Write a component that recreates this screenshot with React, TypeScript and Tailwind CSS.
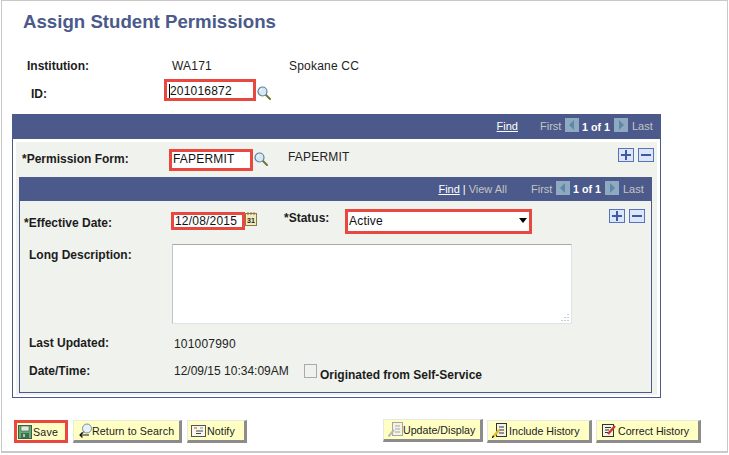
import type { ReactNode } from 'react'

const font = { fontFamily: '"Liberation Sans", Arial, sans-serif' }

const Label = ({ children, className = '' }: { children: ReactNode; className?: string }) => (
  <div className={`shrink-0 text-[12px] leading-[16px] font-bold whitespace-nowrap text-[#1c1c1c] ${className}`}>{children}</div>
)

const Value = ({ children, className = '' }: { children: ReactNode; className?: string }) => (
  <div className={`shrink-0 text-[12px] leading-[16px] tracking-[0.2px] whitespace-nowrap text-[#222] ${className}`}>{children}</div>
)

const SearchIcon = ({ className = '' }: { className?: string }) => (
  <svg width="14" height="14" viewBox="0 0 14 14" className={`shrink-0 ${className}`}>
    <path d="M8.5 8.5 L13 13" stroke="#77743a" strokeWidth="2" strokeLinecap="round" />
    <circle cx="5.5" cy="5.5" r="4.5" fill="#d6e8f4" stroke="#5d7f96" strokeWidth="1.2" />
    <path d="M3 5 A2.6 2.6 0 0 1 5 3" stroke="#fff" strokeWidth="1" fill="none" />
  </svg>
)

const ArrowButton = ({ dir }: { dir: 'left' | 'right' }) => (
  <div className="flex h-[14px] w-[14px] shrink-0 items-center justify-center bg-[#8fa9c0]">
    <svg width="8" height="10" viewBox="0 0 8 10">
      <path d={dir === 'left' ? 'M6 0 V10 L1 5 Z' : 'M2 0 V10 L7 5 Z'} fill="#5f87a6" />
    </svg>
  </div>
)

const Pager = () => (
  <div className="flex items-center whitespace-nowrap">
    <span className="w-[21px] text-[#c4c4c4]">First</span>
    <div className="mb-[3px] ml-[4px]">
      <ArrowButton dir="left" />
    </div>
    <span className="ml-[3px] w-[27px] text-[10.67px] font-bold text-white">1 of 1</span>
    <div className="mb-[3px] ml-[5px]">
      <ArrowButton dir="right" />
    </div>
    <span className="ml-[4px] w-[21px] text-[#c4c4c4]">Last</span>
  </div>
)

const PlusMinus = () => (
  <div className="flex shrink-0 gap-[4px]">
    <div className="flex h-[14px] w-[16px] items-center justify-center border border-[#5a72b8] bg-[#dbe6fb]">
      <svg width="10" height="10" viewBox="0 0 10 10">
        <path d="M5 0 V10 M0 5 H10" stroke="#3f5a9e" strokeWidth="2" />
      </svg>
    </div>
    <div className="flex h-[14px] w-[16px] items-center justify-center border border-[#5a72b8] bg-[#dbe6fb]">
      <svg width="10" height="10" viewBox="0 0 10 10">
        <path d="M0 5 H10" stroke="#3f5a9e" strokeWidth="2" />
      </svg>
    </div>
  </div>
)

const RedBox = ({ children, className = '' }: { children: ReactNode; className?: string }) => (
  <div className={`flex shrink-0 items-center overflow-hidden border-[3px] border-[#e8483f] bg-white text-[12px] leading-[14px] tracking-[0.2px] whitespace-nowrap text-[#111] ${className}`}>
    {children}
  </div>
)

const PsButton = ({ icon, children, className = '' }: { icon: ReactNode; children: ReactNode; className?: string }) => (
  <div className={`flex h-[23px] shrink-0 items-center border border-r-[3px] border-b-[3px] border-t-[#e9e9e0] border-r-[#8c8c8c] border-b-[#8c8c8c] border-l-[#e9e9e0] bg-[#ffffc4] text-[10.67px] whitespace-nowrap text-[#222] ${className}`}>
    {icon}
    {children}
  </div>
)

const SaveIcon = () => (
  <svg width="14" height="14" viewBox="0 0 14 14" className="mr-[1px] shrink-0">
    <rect x="0.5" y="0.5" width="13" height="13" fill="#63ad74" stroke="#3b5f48" />
    <rect x="3" y="1" width="8" height="5" fill="#dfe9e2" stroke="#3b5f48" strokeWidth="0.6" />
    <rect x="3" y="8" width="8" height="5" fill="#3f6f53" />
    <rect x="5" y="9" width="2" height="3" fill="#a9c9b2" />
  </svg>
)

const ReturnIcon = () => (
  <svg width="15" height="15" viewBox="0 0 15 15" className="mr-[-1px] shrink-0">
    <circle cx="9" cy="5.5" r="4.5" fill="#e6f1f8" stroke="#7a8ea0" />
    <path d="M6 8.5 L4 10.5" stroke="#777" strokeWidth="1.5" />
    <path d="M11 12 H2 M4.5 9.5 L2 12 L4.5 14.5" stroke="#111" strokeWidth="1.2" fill="none" />
  </svg>
)

const NotifyIcon = () => (
  <svg width="15" height="12" viewBox="0 0 15 12" className="mr-[1px] shrink-0">
    <rect x="0.5" y="0.5" width="14" height="11" fill="#f7f7ee" stroke="#555" />
    <path d="M3 3 H6" stroke="#c24a3d" />
    <path d="M9 3 H12" stroke="#8a8a8a" />
    <path d="M5 6 H12 M5 8.5 H10" stroke="#444" />
  </svg>
)

const UpdateIcon = () => (
  <svg width="15" height="15" viewBox="0 0 15 15" className="shrink-0">
    <rect x="4.5" y="0.5" width="10" height="13" fill="#f4f4e4" stroke="#a5a5a5" />
    <path d="M7 4 H12 M7 7 H12 M7 10 H12" stroke="#a5a5a5" />
    <path d="M0.5 14.5 L6 8" stroke="#b5b5b5" strokeWidth="2" />
  </svg>
)

const IncludeIcon = () => (
  <svg width="15" height="15" viewBox="0 0 15 15" className="shrink-0">
    <rect x="4.5" y="0.5" width="10" height="13" fill="#f4f4e4" stroke="#333" />
    <path d="M7 4 H12 M7 7 H12 M7 10 H12" stroke="#333" />
    <path d="M1.5 13.5 L7 7" stroke="#e6bb24" strokeWidth="2.6" />
    <path d="M0 15 L1.6 13" stroke="#111" strokeWidth="1.4" />
  </svg>
)

const CorrectIcon = () => (
  <svg width="15" height="15" viewBox="0 0 15 15" className="shrink-0">
    <rect x="0.5" y="1.5" width="11" height="12" fill="#f4f4e4" stroke="#333" />
    <path d="M3 4.5 H9 M3 7 H7 M3 9.5 H6" stroke="#333" />
    <path d="M6 11 L13 3" stroke="#c8382e" strokeWidth="2.4" />
  </svg>
)

const Calendar = () => (
  <svg width="12" height="14" viewBox="0 0 12 14" className="shrink-0">
    <rect x="0.5" y="1.5" width="11" height="12" fill="#f4e9b8" stroke="#8a7a45" />
    <path d="M3 0 V3 M6 0 V3 M9 0 V3" stroke="#8a7a45" />
    <text x="6" y="11" textAnchor="middle" fontSize="7" fontWeight="bold" fill="#222" style={font}>31</text>
  </svg>
)

const App = () => {
  return (
    <div className="h-[455px] w-[729px] overflow-hidden bg-white" style={font}>
      <div className="ml-[1px] h-[453px] w-[727px] border-t border-r border-b-2 border-l border-[#c9c9c9]">
        <h1 className="mt-[10px] ml-[21px] h-[22px] text-[18.67px] leading-[22px] font-bold text-[#4a5a8a]">Assign Student Permissions</h1>

        <div className="mt-[25px] ml-[25px] flex h-[16px]">
          <Label className="w-[145px]">Institution:</Label>
          <Value className="w-[117px]">WA171</Value>
          <Value>Spokane CC</Value>
        </div>

        <div className="mt-[5px] ml-[29px] flex h-[22px] items-start">
          <Label className="mt-[7px] w-[133px]">ID:</Label>
          <RedBox className="h-[22px] w-[92px] pt-[2px] pl-[2px]">
            <span className="border-l border-black">201016872</span>
          </RedBox>
          <SearchIcon className="mt-[7px] ml-[1px]" />
        </div>

        <div className="mt-[13px] ml-[10px] h-[284px] w-[649px] border-r border-b border-l border-[#4b5a8b]">
          <div className="-mx-px flex h-[25px] items-center justify-end bg-[#4b5a8b] pr-[8px] text-[11px]">
            <span className="mr-[22px] text-white underline">Find</span>
            <Pager />
          </div>

          <div className="mx-[3px] mt-[3px] h-[253px] bg-[#f0f2ed]">
            <div className="flex h-[29px] pt-[6px]">
              <Label className="mt-[3px] ml-[6px] w-[147px]">*Permission Form:</Label>
              <RedBox className="mt-[1px] h-[22px] w-[84px] items-start pl-[1px]">FAPERMIT</RedBox>
              <SearchIcon className="mt-[4px] ml-[1px]" />
              <Value className="mt-[1px] ml-[20px]">FAPERMIT</Value>
              <div className="mr-[3px] ml-auto">
                <PlusMinus />
              </div>
            </div>

            <div className="mt-[6px] ml-[3px] h-[216px] w-[633px] border-r border-b border-l border-[#4b5a8b]">
              <div className="-mx-px flex h-[24px] items-center justify-end bg-[#4b5a8b] pr-[8px] text-[11px]">
                <span className="text-white underline">Find</span>
                <span className="mx-[3px] text-white">|</span>
                <span className="mr-[24px] text-[#c4c4c4]">View All</span>
                <Pager />
              </div>

              <div className="pt-[8px]">
                <div className="flex h-[25px] items-start">
                  <Label className="mt-[6px] ml-[4px] w-[147px]">*Effective Date:</Label>
                  <RedBox className="mt-[3px] h-[18px] w-[74px] pl-[1px]">12/08/2015</RedBox>
                  <div className="mt-[3px]">
                    <Calendar />
                  </div>
                  <Label className="mt-[1px] ml-[27px] w-[61px]">*Status:</Label>
                  <RedBox className="h-[25px] w-[187px] justify-between pr-[1px] pb-[2px] pl-[1px]">
                    <span>Active</span>
                    <svg width="8" height="5" viewBox="0 0 8 5" className="mr-[1px]">
                      <path d="M0 0 H8 L4 5 Z" fill="#000" />
                    </svg>
                  </RedBox>
                  <div className="mr-[6px] ml-auto">
                    <PlusMinus />
                  </div>
                </div>

                <div className="mt-[10px] flex items-start">
                  <Label className="mt-[3px] ml-[9px] w-[143px]">Long Description:</Label>
                  <div className="relative h-[80px] w-[400px] border border-[#dfe2e6] border-t-[#a9a9a9] border-l-[#c4c4c4] bg-white">
                    <svg width="8" height="8" viewBox="0 0 8 8" className="absolute right-[2px] bottom-[2px]">
                      <path d="M7 1 V2 M7 4 V5 M4 4 V5 M7 7 V8 M4 7 V8 M1 7 V8" stroke="#999" />
                    </svg>
                  </div>
                </div>

                <div className="mt-[11px] flex h-[16px]">
                  <Label className="ml-[9px] w-[145px]">Last Updated:</Label>
                  <Value className="mt-[1px]">101007990</Value>
                </div>

                <div className="mt-[12px] flex h-[20px] items-start">
                  <Label className="ml-[9px] w-[145px]">Date/Time:</Label>
                  <Value className="w-[130px] tracking-normal">12/09/15 10:34:09AM</Value>
                  <div className="mt-[1px] h-[14px] w-[13px] shrink-0 border border-[#aaa] bg-[#f0f0ee]" />
                  <Label className="mt-[4px] ml-[3px]">Originated from Self-Service</Label>
                </div>
              </div>
            </div>
          </div>
        </div>

        <div className="mt-[22px] ml-[12px] flex items-start">
          <div className="flex h-[23px] w-[54px] shrink-0 items-center border-[3px] border-[#e8483f] bg-[#ffffc4] pl-[1px] text-[10.67px] tracking-[0.2px] text-[#222]">
            <SaveIcon />
            Save
          </div>
          <PsButton icon={<ReturnIcon />} className="ml-[5px] w-[109px] pl-[4px] tracking-[0.1px]">Return to Search</PsButton>
          <PsButton icon={<NotifyIcon />} className="ml-[5px] w-[60px] pl-[3px] tracking-[0.1px]">Notify</PsButton>
          <PsButton icon={<UpdateIcon />} className="mt-[-1px] ml-[136px] w-[100px] pl-[4px]">Update/Display</PsButton>
          <PsButton icon={<IncludeIcon />} className="ml-[4px] w-[105px] pl-[4px]"><span className="ml-[2px]">Include History</span></PsButton>
          <PsButton icon={<CorrectIcon />} className="ml-[4px] w-[105px] pl-[5px]"><span className="ml-[1px]">Correct History</span></PsButton>
        </div>
      </div>
    </div>
  )
}

export default App
